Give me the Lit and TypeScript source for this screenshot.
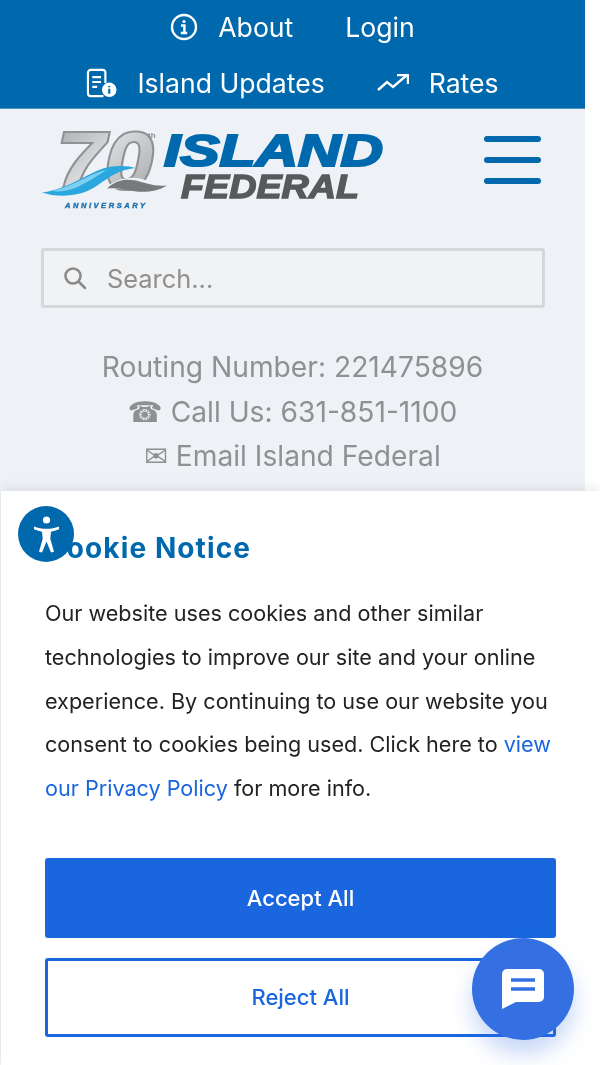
import { LitElement, html, css } from "lit";
import { customElement } from "lit/decorators.js";

@customElement("app-root")
export class AppRoot extends LitElement {
  static styles = css`
    :host { display: block; position: relative; width: 600px; height: 1065px; overflow: hidden; background: #fff; font-family: "Inter", "Noto Sans", "DejaVu Sans", sans-serif; filter: blur(0.45px); }
    .page { width: 585px; height: 1065px; background: #eef1f5; }
    .topbar { background: #0069ae; height: 109px; box-sizing: border-box; display: flex; flex-direction: column; color: #fff; font-size: 26.6px; border-bottom: 1px solid #4d96c6; }
    .row { height: 54px; display: flex; align-items: center; justify-content: center; gap: 52px; }
    .row a { display: flex; align-items: center; gap: 20px; white-space: nowrap; }
    .row + .row { height: 50px; margin-top: 4px; }
    .brand { height: 117px; display: flex; align-items: center; justify-content: space-between; padding: 0 44px 0 40px; box-sizing: border-box; }
    .logo { display: block; }
    .burger { display: flex; flex-direction: column; gap: 15px; width: 57px; margin-top: -16px; }
    .burger i { display: block; height: 6px; border-radius: 3px; background: #0069ae; }
    .search { margin: 22px 40px 0 41px; height: 60px; box-sizing: border-box; border: 3px solid #d5d7da; border-radius: 3px; background: #f0f2f4; display: flex; align-items: center; gap: 20px; padding-left: 19px; color: #8f8f8f; font-size: 25.4px; }
    .contact { margin-top: 37px; text-align: center; color: #8f9092; font-size: 28.2px; line-height: 44.5px; white-space: nowrap; }
    .dialog { position: absolute; left: 1px; right: 0; top: 491px; bottom: 0; background: #fff; box-shadow: 0 -4px 10px rgba(0,0,0,.07); padding: 39px 44px 0; box-sizing: border-box; }
    h2 { margin: 0; font-size: 28px; line-height: 36px; font-weight: 700; letter-spacing: 1.1px; color: #0069ae; white-space: nowrap; }
    p { margin: 26px 0 0; font-size: 21.6px; line-height: 43.8px; color: #222; white-space: nowrap; }
    p a { color: #1a66e0; }
    .btn { box-sizing: border-box; width: 511px; border-radius: 3px; display: flex; align-items: center; justify-content: center; font-size: 22px; font-weight: 500; }
    .accept { height: 80px; margin-top: 47px; background: #1966df; color: #fff; }
    .reject { height: 79px; margin-top: 20px; border: 3px solid #1966df; color: #1966df; background: #fff; }
    .a11y { position: absolute; left: 18px; top: 506px; width: 56px; height: 56px; border-radius: 50%; background: #0069ae; display: flex; align-items: center; justify-content: center; }
    .chat { position: absolute; left: 472px; top: 938px; width: 102px; height: 102px; border-radius: 50%; background: #3570e3; box-shadow: 0 14px 22px rgba(53,112,227,.28); display: flex; align-items: center; justify-content: center; }
  `;

  render() {
    return html`
      <div class="page">
        <div class="topbar">
          <div class="row">
            <a>
              <svg width="28" height="28" viewBox="0 0 28 28" fill="none" stroke="#fff" stroke-width="2.4"><circle cx="14" cy="14" r="12"/><circle cx="14" cy="8.5" r="1.6" fill="#fff" stroke="none"/><path d="M11 12.500h3.400v7M10.800 20h6.400"/></svg>
              About
            </a>
            <a>Login</a>
          </div>
          <div class="row">
            <a>
              <svg width="31" height="30" viewBox="0 0 32 30" fill="none" stroke="#fff" stroke-width="2.2"><path d="M20 15V4.500a3 3 0 0 0-3-3H5a3 3 0 0 0-3 3v21a3 3 0 0 0 3 3h13"/><path d="M6.500 9h9M6.500 14h9M6.500 19h5"/><circle cx="24" cy="22" r="7.500" fill="#fff" stroke="none"/><path d="M24 21v5M24 18v1.500" stroke="#0069ae"/></svg>
              Island Updates
            </a>
            <a>
              <svg width="32" height="18" viewBox="0 0 32 18" fill="none" stroke="#fff" stroke-width="2.4"><path d="M1 16l9-8 6 5 14-12"/><path d="M20 1h11v9"/></svg>
              Rates
            </a>
          </div>
        </div>
        <div class="brand">
          <svg class="logo" width="345" height="90" viewBox="0 0 345 90">
            <defs>
              <linearGradient id="sv" x1="0" y1="0" x2="1" y2="1"><stop offset="0" stop-color="#a2a4a7"/><stop offset=".45" stop-color="#d8d9db"/><stop offset="1" stop-color="#a0a2a5"/></linearGradient>
            </defs>
            <text x="17" y="65" font-family="Liberation Sans" font-weight="700" font-style="italic" font-size="80" textLength="96" lengthAdjust="spacingAndGlyphs" fill="url(#sv)" stroke="#8f9194" stroke-width="4" paint-order="stroke">70</text>
            <text x="108" y="15" font-family="Liberation Sans" font-weight="700" font-size="8" fill="#8a8c8f">th</text>
            <path d="M60 68C78 54 92 52 108 58c10 3 17 3 20 2.500-12 9-27 9-40 6-10-2-20-1-28 1.500z" fill="#eef1f5"/>
            <path d="M67 65.500C78 55 90 55 105 60c10 3 17 3 22 2.500-12 7.500-27 7.500-40 4.500-7-2-14-2-20-1.500z" fill="#77797c"/>
            <path d="M2 69.500C30 66 50 48 67 44.500c13-2.500 23-1.500 28 .5-15 2-23 7-37 17C42 74 18 75 2 69.500z" fill="#2aa7df"/>
            <path d="M12 68C32 64 50 50 67 47c-9 5-20 13-32 18-8 3-16 4-23 3z" fill="#7fd0f0"/>
            <text x="25" y="85" font-family="Liberation Sans" font-weight="700" font-style="italic" font-size="7.5" textLength="80" fill="#1d6fb0" stroke="#1d6fb0" stroke-width=".4">ANNIVERSARY</text>
            <text x="124" y="43" font-family="Liberation Sans" font-weight="700" font-style="italic" font-size="45" textLength="219" lengthAdjust="spacingAndGlyphs" fill="#0069ae" stroke="#0069ae" stroke-width="2.200">ISLAND</text>
            <text x="141" y="75" font-family="Liberation Sans" font-weight="700" font-style="italic" font-size="33" textLength="178" lengthAdjust="spacingAndGlyphs" fill="#58595b" stroke="#58595b" stroke-width="1.400">FEDERAL</text>
          </svg>
          <div class="burger"><i></i><i></i><i></i></div>
        </div>
        <div class="search">
          <svg width="24" height="24" viewBox="0 0 24 24" fill="none" stroke="#8a8a8a" stroke-width="2.600" stroke-linecap="round"><circle cx="10" cy="10" r="7.500"/><path d="M16 16l6 6"/></svg>
          <span>Search...</span>
        </div>
        <div class="contact">
          Routing Number: 221475896<br />
          ☎ Call Us: 631-851-1100<br />
          ✉ Email Island Federal
        </div>
      </div>
      <div class="dialog">
        <h2>Cookie Notice</h2>
        <p>
          Our website uses cookies and other similar<br />
          technologies to improve our site and your online<br />
          experience. By continuing to use our website you<br />
          consent to cookies being used. Click here to <a>view</a><br />
          <a>our Privacy Policy</a> for more info.
        </p>
        <div class="btn accept">Accept All</div>
        <div class="btn reject">Reject All</div>
      </div>
      <div class="a11y">
        <svg width="25" height="37" viewBox="0 0 25 37" fill="#fff"><circle cx="12.500" cy="4" r="3.600"/><path d="M0 10.500c4 1.500 8 2.300 12.500 2.300S21 12 25 10.500l.5 2.600c-3 1.300-6 2.200-8.500 2.700l-.7 7 3.700 13-3 .7-4.500-11-4.500 11-3-.7 3.700-13-.7-7c-2.500-.5-5.500-1.400-8.500-2.700z"/></svg>
      </div>
      <div class="chat">
        <svg width="42" height="40" viewBox="0 0 42 40"><path d="M5 0h32a5 5 0 0 1 5 5v23a5 5 0 0 1-5 5H14L0 40V5a5 5 0 0 1 5-5z" fill="#fff"/><path d="M9 11h24M9 20h24" stroke="#3570e3" stroke-width="3.500"/></svg>
      </div>
    `;
  }
}
